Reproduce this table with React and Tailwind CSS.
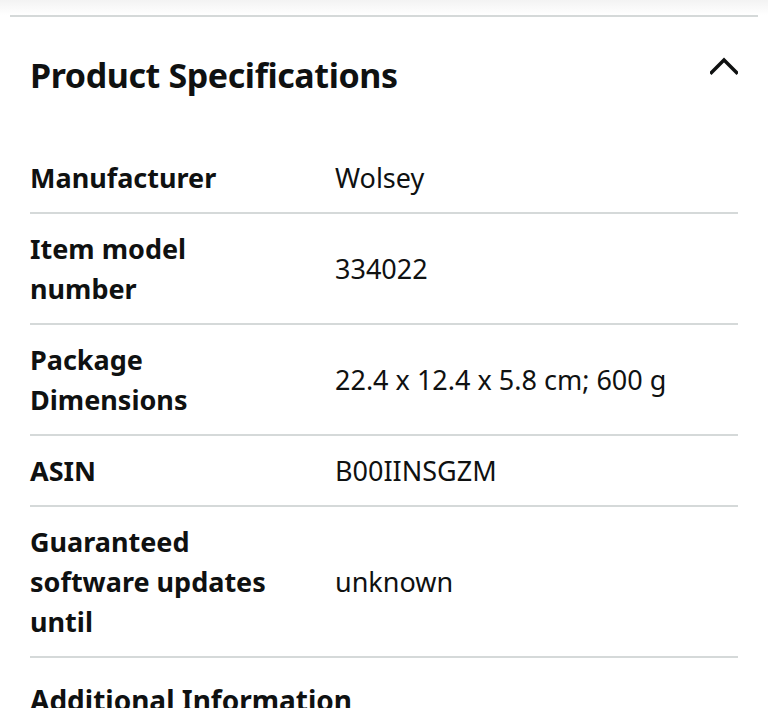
import React from "react";

const specs = [
  { label: "Manufacturer", value: "Wolsey" },
  { label: "Item model number", value: "334022" },
  { label: "Package Dimensions", value: "22.4 x 12.4 x 5.8 cm; 600 g" },
  { label: "ASIN", value: "B00IINSGZM" },
  { label: "Guaranteed software updates until", value: "unknown" },
];

export default function App() {
  return (
    <div
      className="w-[768px] h-[708px] overflow-hidden bg-white text-[#0f1111]"
      style={{ fontFamily: '"Noto Sans", "Open Sans", sans-serif' }}
    >
      {/* top fade + divider */}
      <div className="h-[15px] bg-gradient-to-b from-[#f3f3f3] to-white" />
      <div className="mx-[10px] h-[2px] bg-[#d5d9d9]" />

      {/* header */}
      <div className="flex items-start justify-between pl-[30px] pr-[30px] pt-[38px] pb-[48px]">
        <h2 className="text-[34px] font-bold leading-[40px] tracking-[-0.4px]">
          Product Specifications
        </h2>
        <svg width="28" height="22" viewBox="0 0 28 22" fill="none">
          <path d="M1.5 17.5 L14 5 L26.5 17.5" stroke="#0f1111" strokeWidth="3.4" strokeLinecap="square" />
        </svg>
      </div>

      {/* specs table */}
      <div className="mx-[30px]">
        {specs.map((row) => (
          <div
            key={row.label}
            className="grid grid-cols-[305px_1fr] items-center border-b-2 border-[#d5d9d9] pt-[15px] pb-[14px]"
          >
            <div className="max-w-[250px] text-[27px] font-bold leading-[40px]">{row.label}</div>
            <div className="text-[27px] leading-[40px]">{row.value}</div>
          </div>
        ))}
      </div>

      <div className="px-[30px] pt-[22px]">
        <h2 className="text-[28px] font-bold leading-[40px]">Additional Information</h2>
      </div>
    </div>
  );
}
